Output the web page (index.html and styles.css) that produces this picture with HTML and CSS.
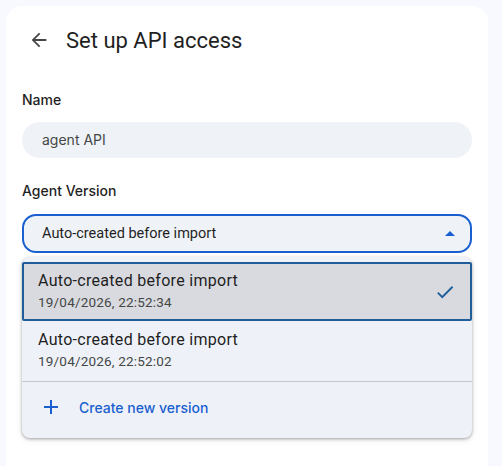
FILE: index.html
```html
<!DOCTYPE html>
<html lang="en">
<head>
  <meta charset="UTF-8" />
  <meta name="viewport" content="width=device-width, initial-scale=1.0"/>
  <title>Set up API access</title>
  <link rel="stylesheet" href="styles.css">
</head>
<body>

<div class="card">
  <div class="header">
    <button class="back" aria-label="Back">
      <svg width="22" height="22" viewBox="0 0 24 24"><path d="M20 11H7.83l5.59-5.59L12 4l-8 8 8 8 1.41-1.41L7.83 13H20v-2z" fill="#444746"/></svg>
    </button>
    <h1>Set up API access</h1>
  </div>

  <label class="field-label">Name</label>
  <div class="text-input">agent API</div>

  <label class="field-label version-label">Agent Version</label>
  <div class="select-wrap">
    <div class="select">
      <span>Auto-created before import</span>
      <span class="caret"></span>
    </div>

    <div class="menu">
      <div class="option selected">
        <div class="option-text">
          <div class="option-title">Auto-created before import</div>
          <div class="option-date">19/04/2026, 22:52:34</div>
        </div>
        <svg class="check" width="22" height="22" viewBox="0 0 24 24"><path d="M9 16.17L4.83 12l-1.42 1.41L9 19 21 7l-1.41-1.41z" fill="#1f5e99"/></svg>
      </div>
      <div class="option">
        <div class="option-text">
          <div class="option-title">Auto-created before import</div>
          <div class="option-date">19/04/2026, 22:52:02</div>
        </div>
      </div>
      <div class="menu-divider"></div>
      <div class="create-row">
        <svg width="16" height="16" viewBox="0 0 16 16"><path d="M8 1v14M1 8h14" stroke="#1a5fd0" stroke-width="2"/></svg>
        <span>Create new version</span>
      </div>
    </div>
  </div>
</div>

</body>
</html>
```

FILE: styles.css
```css
body {
  margin: 0;
  padding: 6px 14px 0 6px;
  background: #f8f9fe;
  font-family: Inter, "Noto Sans", sans-serif;
  height: 460px;
  overflow: hidden;
}

.card {
  background: #ffffff;
  border-radius: 16px 16px 0 0;
  padding: 20px 16px 0 16px;
  height: 440px;
}

.header {
  display: flex;
  align-items: center;
  height: 28px;
}

.back {
  background: none;
  border: none;
  padding: 0;
  margin-left: 6px;
  width: 22px;
  height: 22px;
  display: flex;
  align-items: center;
  justify-content: center;
}

.header h1 {
  margin: 0 0 0 16px;
  font-family: Roboto, "Noto Sans", sans-serif;
  font-size: 22px;
  font-weight: 400;
  color: #1f1f1f;
}

.field-label {
  display: block;
  margin-top: 36px;
  line-height: 20px;
  font-size: 14px;
  font-weight: 500;
  color: #1f1f1f;
}

.version-label {
  margin-top: 23px;
}

.text-input {
  margin-top: 12px;
  height: 36px;
  line-height: 36px;
  padding: 0 20px;
  background: #eff3f8;
  border-radius: 18px;
  font-size: 14px;
  color: #444746;
}

.select-wrap {
  position: relative;
  margin-top: 13px;
}

.select {
  height: 35px;
  display: flex;
  align-items: center;
  justify-content: space-between;
  padding: 0 15px 0 18px;
  border: 2px solid #1a5fd0;
  border-radius: 14px;
  background: #eff3f8;
  font-family: Roboto, sans-serif;
  font-size: 14.5px;
  color: #1f1f1f;
}

.caret {
  width: 0;
  height: 0;
  border-left: 5px solid transparent;
  border-right: 5px solid transparent;
  border-bottom: 5px solid #1a5fd0;
}

.menu {
  position: absolute;
  top: calc(100% + 4px);
  left: 0;
  right: 0;
  padding: 5px 0 0 0;
  background: #eef2f8;
  border-radius: 8px;
  box-shadow: 0 1px 3px rgba(0, 0, 0, 0.3), 0 2px 6px rgba(0, 0, 0, 0.1);
  font-family: Roboto, sans-serif;
}

.option {
  display: flex;
  align-items: center;
  justify-content: space-between;
  padding: 7px 14px 6px 14px;
  border: 2px solid transparent;
}

.option.selected {
  background: #d9dadf;
  border-color: #1f5e99;
  border-radius: 2px;
}

.option-title {
  font-size: 16px;
  letter-spacing: 0.3px;
  line-height: 20px;
  color: #1f1f1f;
}

.option-date {
  font-size: 13.5px;
  letter-spacing: 0.2px;
  line-height: 22px;
  color: #444746;
}

.check {
  margin-right: 0;
}

.menu-divider {
  height: 1px;
  background: #c4c7cc;
  margin-top: 1px;
}

.create-row {
  display: flex;
  align-items: center;
  height: 50px;
  padding: 0 0 6px 21px;
  font-family: Inter, sans-serif;
  font-size: 14px;
  font-weight: 500;
  color: #1a5fd0;
}

.create-row span {
  margin-left: 20px;
}
```
